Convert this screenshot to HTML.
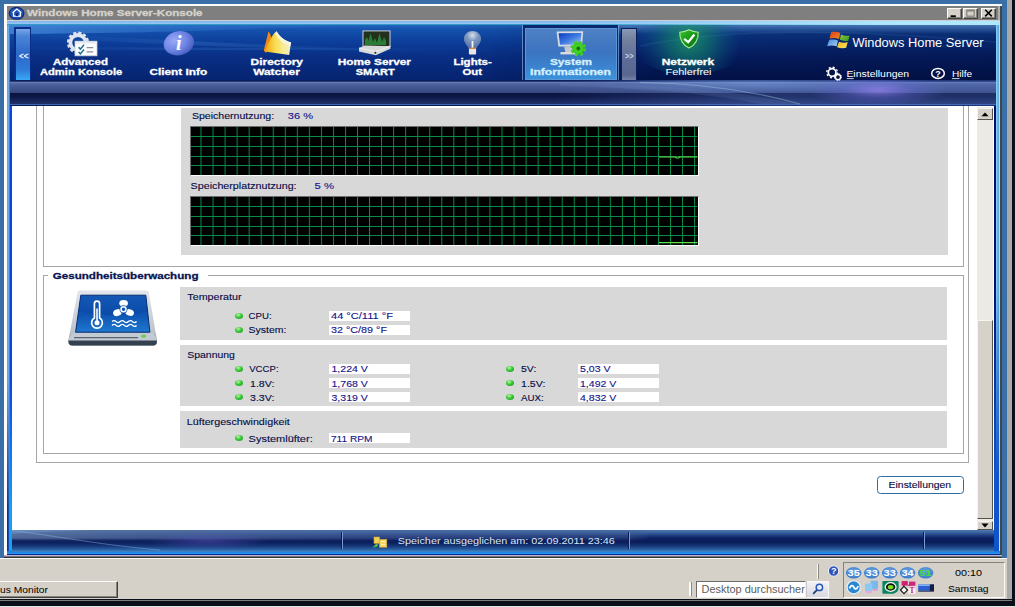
<!DOCTYPE html>
<html>
<head>
<meta charset="utf-8">
<title>Windows Home Server-Konsole</title>
<style>
html,body{margin:0;padding:0;}
body{width:1015px;height:607px;overflow:hidden;position:relative;background:#3a6ea6;font-family:"Liberation Sans",sans-serif;font-size:10px;}
.a{position:absolute;}
#frameR1{left:1007px;top:0;width:5px;height:599.6px;background:#a9a9a9;}
#frameR2{left:1012px;top:0;width:3px;height:605.6px;background:#0b0e16;}
#frameB1{left:0;top:599.4px;width:1015px;height:6.2px;background:linear-gradient(to bottom,#0b0e16 0,#0b0e16 1px,#7e7e80 1.2px,#7e7e80 1.9px,#0b0e16 2.1px,#0b0e16 6.2px);}
#frameB2{left:0;top:605.6px;width:1015px;height:1.4px;background:#e2e6ec;}
/* window */
#win{left:4px;top:4px;width:998.2px;height:553px;background:#fbfbfb;}
#winR{left:1000px;top:6px;width:2.2px;height:551px;background:#3e494f;}
#winB{left:4px;top:555px;width:998px;height:2.5px;background:linear-gradient(to bottom,#bab4cc 0,#bab4cc 1.4px,#343438 1.6px,#343438 2.5px);}
#title{left:7px;top:6px;width:993px;height:14px;background:linear-gradient(to right,#7f7f7f 0,#7f7f7f 991.4px,#b0b0b0 991.4px);}
#titleLine{left:7px;top:19.6px;width:993px;height:1.4px;background:#cdd0d6;}
.tbtn{top:7.8px;width:15px;height:10.8px;box-sizing:border-box;background:#d5d1c9;border:1px solid;border-color:#fbfaf6 #45433f #45433f #fbfaf6;box-shadow:inset -1px -1px 0 #85827c;}
/* app frame */
#app{left:7px;top:21px;width:993px;height:534px;background:linear-gradient(to right,#6a9ad4 0,#72b2f2 2.4px,#0a46d8 2.6px,#0a46d8 5px,#0a46d8 986px,#001070 987px,#001070 989px,#88d2fc 989px,#7cc4f2 990px,#64acdc 990.8px,#64acdc 991.8px,#b4dcf4 992.4px,#b4dcf4 993px);}
#appTop{left:7px;top:21px;width:993px;height:3.6px;z-index:3;background:linear-gradient(to right,rgba(176,232,252,0) 0,rgba(176,232,252,0) 55%,rgba(176,232,252,.95) 88%,rgba(176,232,252,1) 100%),linear-gradient(to bottom,#7eb2ea 0,#94c4f2 2.5px,#2e9cc6 2.7px,#2e9cc6 3.6px);}
#appBot{left:7px;top:550.5px;width:993px;height:4.5px;background:linear-gradient(to bottom,#1a74e0 0,#2492f0 2.6px,#0a2a90 3.1px,#0a2a90 4.5px);}
/* header */
#hdr{left:10px;top:24px;width:986px;height:56px;overflow:hidden;background:linear-gradient(to bottom,#2868be 0,#1452ae 10%,#0c3e9a 32%,#092e84 60%,#062470 100%);}
#hdrDark{left:0;top:0;width:986px;height:56px;background:linear-gradient(to right,rgba(0,4,40,0) 0,rgba(0,4,40,0) 45%,rgba(0,4,40,.3) 66%,rgba(0,4,40,.38) 100%);}
#hdrDark2{left:480px;top:0;width:506px;height:56px;background:linear-gradient(to bottom,rgba(0,4,40,0) 0,rgba(0,4,40,.1) 40%,rgba(0,4,40,.38) 100%);-webkit-mask-image:linear-gradient(to right,transparent 0,#000 35%);mask-image:linear-gradient(to right,transparent 0,#000 35%);}
#sub{left:10px;top:80px;width:986px;height:26px;overflow:hidden;background:linear-gradient(to bottom,#0a1e5c 0,#0a1e5c 1.3px,#6e82b8 2px,#4e629e 4px,#37477f 12.5px,#0a1440 13.5px,#0c1848 17px,#202f68 23.5px,#4270b8 24.4px,#0a1a5a 25.2px);}
#subGlow{left:0;top:0;width:986px;height:26px;background:radial-gradient(ellipse 70px 16px at 868px 10px,rgba(150,130,240,.75) 0,rgba(110,110,220,.35) 50%,rgba(90,100,200,0) 100%),radial-gradient(ellipse 160px 10px at 740px 4px,rgba(130,170,230,.4) 0,rgba(120,160,220,0) 100%),linear-gradient(to right,rgba(80,110,190,0) 0,rgba(80,110,190,0) 55%,rgba(90,120,200,.3) 75%,rgba(90,120,200,.25) 100%);}
/* content */
#content{left:12px;top:106px;width:982px;height:424px;background:#fff;overflow:hidden;}
.gb{border:1px solid #a6a6a6;box-sizing:border-box;}
.pan{background:#d8d8d8;}
.graph{background:#000;border:1px solid;border-color:#6e6e6e #fff #fff #6e6e6e;box-sizing:border-box;overflow:hidden;}
.val{background:#fff;height:10px;width:81px;}
.led{width:8px;height:6px;border-radius:50%;background:radial-gradient(ellipse at 40% 30%,#b8f8a0 0,#38c838 45%,#168c1c 100%);}
.sbb{width:15.4px;box-sizing:border-box;background:#d6d2ca;border:1px solid;border-color:#f6f4ee #55524c #55524c #f6f4ee;}
/* status */
#status{left:12px;top:530px;width:982px;height:21.5px;overflow:hidden;background:linear-gradient(to bottom,#4c78b0 0,#3a629e 2.5px,#1e3c7e 5.500px,#0c2060 8.500px,#0a1c5a 12px,#163676 16px,#2c60a4 19.500px,#3e80be 21.500px);}
#stL{left:0;top:0;width:982px;height:21.5px;background:linear-gradient(to right,rgba(96,120,162,.8) 0,rgba(84,108,156,.7) 120px,rgba(76,100,156,.5) 330px,rgba(70,96,150,.35) 620px,rgba(70,96,150,0) 640px);-webkit-mask-image:linear-gradient(to bottom,#000 0,#000 8px,rgba(0,0,0,.15) 10.5px,rgba(0,0,0,0) 13px);mask-image:linear-gradient(to bottom,#000 0,#000 8px,rgba(0,0,0,.15) 10.5px,rgba(0,0,0,0) 13px);}
#stG{left:0;top:0;width:982px;height:21.5px;background:radial-gradient(ellipse 60px 9px at 196px 11px,rgba(100,90,200,.42) 0,rgba(90,90,200,0) 100%);}
.sep{width:2px;height:17px;top:2px;background:linear-gradient(to right,#0a1a50 0,#0a1a50 50%,#7a9ad0 50%,#7a9ad0 100%);}
/* taskbar */
.grip{width:2.6px;background:linear-gradient(to right,#fdfdfb 0,#fdfdfb 50%,#8a8780 50%,#8a8780 100%);}
#task{left:0;top:557.5px;width:1007px;height:41.9px;background:#d5d1c9;border-top:1.5px solid #fdfdfb;box-sizing:border-box;}
</style>
</head>
<body>
<div class="a" id="frameR1"></div>
<div class="a" id="frameB1"></div>
<div class="a" id="frameB2"></div>
<div class="a" id="frameR2"></div>

<div class="a" id="win"></div>
<div class="a" id="winR"></div>
<div class="a" id="winB"></div>
<div class="a" id="title"></div>
<div class="a" id="titleLine"></div>
<div class="a tbtn" style="left:947px;"></div><div class="a tbtn" style="left:963px;"></div><div class="a tbtn" style="left:981px;"></div>
<div class="a" id="app"></div>
<div class="a" id="frL" style="left:7px;top:380px;width:5.500px;height:175px;background:linear-gradient(to right,#1c2c8a 0,#1c2c8a 1.400px,#14a0f8 1.800px,#14a0f8 4.800px,#4890c8 5.200px);-webkit-mask-image:linear-gradient(to bottom,transparent 0,#000 130px);mask-image:linear-gradient(to bottom,transparent 0,#000 130px);"></div>
<div class="a" id="frR" style="left:994px;top:106px;width:4.800px;height:449px;background:linear-gradient(to bottom,rgba(16,84,200,0) 0,rgba(16,84,200,0) 180px,rgba(16,84,200,.55) 280px,rgba(16,84,204,1) 370px,rgba(16,84,204,1) 449px);"></div>
<div class="a" id="appTop"></div>
<div class="a" id="appBot"></div>

<div class="a" id="hdr"><div class="a" id="hdrDark"></div><div class="a" id="hdrDark2"></div>
<svg class="a" style="left:0;top:0" width="986" height="56" viewBox="10 24 986 56">
<defs>
<radialGradient id="gGlow" cx="689" cy="40" r="52" gradientUnits="userSpaceOnUse"><stop offset="0" stop-color="#1c9a60" stop-opacity=".85"/><stop offset=".45" stop-color="#128070" stop-opacity=".55"/><stop offset="1" stop-color="#0a5a90" stop-opacity="0"/></radialGradient>
<linearGradient id="gSw1" x1="0" y1="0" x2="1" y2="0"><stop offset="0" stop-color="#5aa0ec" stop-opacity=".55"/><stop offset=".6" stop-color="#3a80d8" stop-opacity=".25"/><stop offset="1" stop-color="#3a80d8" stop-opacity="0"/></linearGradient>
<linearGradient id="gSw2" x1="0" y1="0" x2="1" y2="0"><stop offset="0" stop-color="#4a90e0" stop-opacity="0"/><stop offset=".4" stop-color="#5aa0e8" stop-opacity=".35"/><stop offset="1" stop-color="#3a80d8" stop-opacity="0"/></linearGradient>
<linearGradient id="gTopR" x1="0" y1="0" x2="0" y2="1"><stop offset="0" stop-color="#6a9ad8" stop-opacity=".6"/><stop offset="1" stop-color="#6a9ad8" stop-opacity="0"/></linearGradient>
</defs>
<path d="M10 24H400C300 27 180 33 10 34Z" fill="url(#gSw1)"/>
<path d="M30 34C150 38 260 46 460 52C300 50.500 150 44 30 37Z" fill="url(#gSw2)" opacity=".55"/>
<path d="M10 47C160 47 300 49 520 48C300 51 160 50 10 49.500Z" fill="url(#gSw2)" opacity=".5"/>
<rect x="600" y="24" width="396" height="10" fill="url(#gTopR)"/>
<ellipse cx="689" cy="40" rx="62" ry="34" fill="url(#gGlow)"/>
<path d="M640 46C720 30 820 27 996 42" stroke="#7ab0e8" stroke-opacity=".1" stroke-width="1.6" fill="none"/>
</svg></div>
<div class="a" id="navL" style="left:14.400px;top:27px;width:17px;height:53px;box-sizing:border-box;border:2.200px solid #0a2e86;border-left-width:2.800px;border-right-width:1.800px;border-bottom:0;background:linear-gradient(to bottom,#7aa6e6 0,#4a84d8 14%,#2e68c8 50%,#2e7cd8 80%,#3aa8f4 100%);"></div>
<div class="a" id="tabO" style="left:522.4px;top:20.5px;width:97px;height:60.5px;box-sizing:border-box;border:1px solid rgba(150,190,235,.6);border-bottom-color:rgba(150,190,235,.35);"></div>
<div class="a" id="tabD" style="left:523.4px;top:25px;width:95px;height:55.5px;background:#0a2870;"></div>
<div class="a" id="tabI" style="left:524.9px;top:27.8px;width:92.4px;height:51.8px;box-sizing:border-box;border:1px solid #5c94d4;background:linear-gradient(to bottom,#4e80c4 0,#3c74c0 45%,#3a80cc 70%,#3a92dc 100%);"></div>
<div class="a" id="navR" style="left:621.2px;top:28px;width:15.4px;height:52px;box-sizing:border-box;border:1.2px solid #0a1e5c;border-bottom:0;background:linear-gradient(to bottom,#8a98b8 0,#74829e 20%,#5c6c98 60%,#5a6890 90%,#7482a8 100%);"></div>
<div class="a" id="sub"><div class="a" id="subGlow"></div><svg class="a" style="left:0;top:0" width="986" height="26" viewBox="10 80 986 26"><path d="M640 82.500C700 83 750 90 800 104" stroke="#a4d4ec" stroke-opacity=".4" stroke-width="1.100" fill="none"/><path d="M560 83C640 84 720 88 800 104L760 104C700 92 640 88 560 86Z" fill="#88b0e0" fill-opacity=".12"/></svg></div>
<div class="a" id="content"><div class="a" style="left:-12px;top:-106px;width:1015px;height:607px;">
 <div class="a gb" style="left:36px;top:90px;width:933px;height:373px;"></div>
 <div class="a gb" style="left:43px;top:90px;width:921px;height:177px;"></div>
 <div class="a pan" style="left:180.5px;top:107.5px;width:767.5px;height:147.5px;"></div>
 <div class="a graph" style="left:190px;top:126px;width:508.5px;height:50px;"></div>
 <div class="a graph" style="left:190px;top:196px;width:508.5px;height:50px;"></div>
 <div class="a gb" style="left:43px;top:275px;width:921px;height:179px;"></div>
 <div class="a" style="left:48px;top:270px;width:160px;height:12px;background:#fff;"></div>
 <div class="a pan" style="left:180px;top:286.5px;width:767px;height:53px;"></div>
 <div class="a pan" style="left:180px;top:345px;width:767px;height:60.5px;"></div>
 <div class="a pan" style="left:180px;top:411px;width:767px;height:36.5px;"></div>
 <div class="a val" style="left:329px;top:310.6px;"></div>
 <div class="a val" style="left:329px;top:324.6px;"></div>
 <div class="a val" style="left:329px;top:363.8px;"></div>
 <div class="a val" style="left:329px;top:377.9px;"></div>
 <div class="a val" style="left:329px;top:391.9px;"></div>
 <div class="a val" style="left:329px;top:433px;"></div>
 <div class="a val" style="left:577.5px;top:363.8px;"></div>
 <div class="a val" style="left:577.5px;top:377.9px;"></div>
 <div class="a val" style="left:577.5px;top:391.9px;"></div>
 <div class="a led" style="left:235.4px;top:312.8px;"></div>
 <div class="a led" style="left:235.4px;top:326.8px;"></div>
 <div class="a led" style="left:235.4px;top:366px;"></div>
 <div class="a led" style="left:235.4px;top:380.2px;"></div>
 <div class="a led" style="left:235.4px;top:394.2px;"></div>
 <div class="a led" style="left:235.4px;top:435.2px;"></div>
 <div class="a led" style="left:506.3px;top:366px;"></div>
 <div class="a led" style="left:506.3px;top:380.2px;"></div>
 <div class="a led" style="left:506.3px;top:394.2px;"></div>
 <div class="a" id="btn" style="left:877px;top:476px;width:87px;height:17.5px;box-sizing:border-box;border:1px solid #2e6ca4;border-radius:3.5px;background:#fff;"></div>
 <div class="a" id="sbTrack" style="left:977px;top:107px;width:16px;height:423px;background:#eceae4;"></div>
 <div class="a sbb" style="left:977.3px;top:108px;height:12px;"></div>
 <div class="a sbb" style="left:977.3px;top:320px;height:199px;"></div>
 <div class="a sbb" style="left:977.3px;top:520.5px;height:9.5px;"></div>
</div></div>
<div class="a" id="status"><div class="a" id="stL"></div><div class="a" id="stG"></div>
<svg class="a" style="left:0;top:0" width="982" height="22" viewBox="12 530 982 22"><path d="M12 530.500C50 535 100 545 160 550" stroke="#9ac4f0" stroke-opacity=".4" stroke-width="1" fill="none"/><path d="M12 530H90C60 532 40 531 12 534Z" fill="#7aa4dc" fill-opacity=".35"/></svg>
<div class="a sep" style="left:328.5px;"></div><div class="a sep" style="left:615.5px;"></div><div class="a sep" style="left:910.5px;"></div></div>
<div class="a" id="task"></div>
<div class="a" id="tbtn" style="left:-2px;top:581px;width:119.5px;height:17px;box-sizing:border-box;border:1px solid;border-color:#fff #404040 #404040 #fff;background:#d5d1c9;box-shadow:inset -1px -1px 0 #85827c;"></div>
<div class="a grip" style="left:689.2px;top:582.3px;height:14px;"></div>
<div class="a grip" style="left:816.8px;top:564px;height:15px;"></div>
<div class="a" id="srch" style="left:696.4px;top:581.4px;width:109.5px;height:16.6px;box-sizing:border-box;background:#fff;border:1px solid;border-color:#6e6c68 #f4f2ee #f4f2ee #6e6c68;"></div>
<div class="a" id="srchB" style="left:805.6px;top:581.4px;width:23.4px;height:16.6px;background:linear-gradient(to bottom,#f2f2f4,#d8d8de);box-sizing:border-box;border:1px solid #f8f8f8;border-left-color:#c8c8cc;"></div>
<div class="a" id="tray" style="left:843px;top:562px;width:161.5px;height:36px;box-sizing:border-box;border:1px solid;border-color:#85827c #fbfaf6 #fbfaf6 #85827c;"></div>
<svg class="a" id="ov" style="left:0;top:0" width="1015" height="607" viewBox="0 0 1015 607">
<defs>
<pattern id="grid" x="200.5" y="127" width="12.04" height="9.73" patternUnits="userSpaceOnUse"><path d="M0.5 0V9.73" stroke="#0a8c4a" stroke-width="1" fill="none"/></pattern>
<pattern id="grid2" x="200.5" y="196.8" width="12.04" height="9.85" patternUnits="userSpaceOnUse"><path d="M0.5 0V9.85" stroke="#0a8c4a" stroke-width="1" fill="none"/></pattern>
</defs>
<g id="icons">
<defs>
<radialGradient id="gInfo" cx=".38" cy=".35" r=".75"><stop offset="0" stop-color="#9aaaf8"/><stop offset=".55" stop-color="#6e84e4"/><stop offset="1" stop-color="#3e54b8"/></radialGradient>
<linearGradient id="gFold" x1="0" y1="0" x2="1" y2="0"><stop offset="0" stop-color="#f49c18"/><stop offset=".18" stop-color="#f8bc28"/><stop offset=".4" stop-color="#f8dc54"/><stop offset=".7" stop-color="#f8ec90"/><stop offset="1" stop-color="#f2eecc"/></linearGradient>
<radialGradient id="gBulb" cx=".5" cy=".25" r=".8"><stop offset="0" stop-color="#d4e0ee"/><stop offset=".4" stop-color="#8098c0"/><stop offset="1" stop-color="#4c6ca4"/></radialGradient>
<linearGradient id="gScr" x1="0" y1="0" x2="1" y2="1"><stop offset="0" stop-color="#0c38c0"/><stop offset=".5" stop-color="#3c78e0"/><stop offset="1" stop-color="#a0c4f4"/></linearGradient>
<linearGradient id="gShield" x1="0" y1="0" x2="1" y2="1"><stop offset="0" stop-color="#38c030"/><stop offset=".5" stop-color="#189818"/><stop offset="1" stop-color="#0a6410"/></linearGradient>
<linearGradient id="gRed" x1="0" y1="0" x2="1" y2="1"><stop offset="0" stop-color="#e03c18"/><stop offset="1" stop-color="#f48a20"/></linearGradient>
<linearGradient id="gGrn" x1="0" y1="0" x2="1" y2="1"><stop offset="0" stop-color="#88c83c"/><stop offset="1" stop-color="#3c981c"/></linearGradient>
<linearGradient id="gBlu" x1="0" y1="0" x2="1" y2="1"><stop offset="0" stop-color="#4088dc"/><stop offset="1" stop-color="#a8d0f4"/></linearGradient>
<linearGradient id="gYel" x1="0" y1="0" x2="1" y2="1"><stop offset="0" stop-color="#f8b418"/><stop offset="1" stop-color="#f8e468"/></linearGradient>
</defs>
<g id="i-title"><ellipse cx="16.600" cy="13.300" rx="7.300" ry="5.900" fill="#1e54b8" stroke="#0c2a7c" stroke-width="1.200"/><path d="M12.500 12.700L16.900 9.100L21.300 12.700M13.500 12.400V16.100H20.300V12.400" fill="none" stroke="#fff" stroke-width="1.300"/><rect x="15.700" y="13.300" width="2.400" height="2.800" fill="#0c2a7c"/></g>
<g id="i-admin"><circle cx="78" cy="42.600" r="7.600" fill="none" stroke="#dfe4ee" stroke-width="3.800"/><circle cx="78" cy="42.600" r="10" fill="none" stroke="#dfe4ee" stroke-width="2.200" stroke-dasharray="3.100 2.136"/><rect x="75" y="41.2" width="22" height="14.6" fill="#fdfdfd" stroke="#c4ccdc" stroke-width=".8"/><rect x="75.4" y="41.5" width="21.2" height="2" fill="#e4e8f0"/><path d="M78.6 47.2l1.8 1.9l3.6-4.4M78.6 52l1.8 1.9l3.6-4.4" fill="none" stroke="#1a6e90" stroke-width="1.5"/><path d="M86.6 47.6h6.6M86.6 51.8h6.6" stroke="#8c8c9c" stroke-width="1.2"/></g>
<g id="i-info"><ellipse cx="178.9" cy="43.3" rx="15.3" ry="12" fill="url(#gInfo)" transform="rotate(-12 178.9 43.3)"/><text x="176" y="50.400" font-family="Liberation Serif" font-style="italic" font-weight="bold" font-size="20" fill="#fff">i</text></g>
<g id="i-dir"><path d="M268.400 31.600C267 38 265 45 263.800 50.600L266 53L272 40C271 36 270 33 268.400 31.600Z" fill="#ee8a14"/><path d="M276.500 31.300C274.500 33 272.500 35 271.500 37.500C269 42 266.500 47 264.800 51.400L289.200 55L291 42.300C285 41 280 37 276.500 31.300Z" fill="url(#gFold)"/><path d="M276.500 31.300C280 37 285 41 291 42.300L290.500 46C284 44 278.500 40 275 33.500Z" fill="#f6f6ec" opacity=".85"/></g>
<g id="i-smart"><rect x="363" y="30.9" width="27" height="15.6" fill="#24301f" stroke="#bcc4cc" stroke-width="1.1"/><path d="M365 45V40l2-3 1.5 4 2-8 2.5 9 2-4 2 5 2.5-10 2.5 9 2-5 2 4V45Z" fill="#2a8c3a" opacity=".85"/><path d="M364.9 45.4L390.4 46.2V48.8L375.8 55.2L359 51.6V48Z" fill="#d6dad8"/><path d="M359 48L375.8 51.6L390.4 46.2" fill="none" stroke="#f4f4f4" stroke-width=".8"/><circle cx="375.4" cy="52.8" r="1" fill="#202820"/></g>
<g id="i-bulb"><path d="M472.500 31c4.900 0 8.600 3.500 8.600 7.900c0 3.800-3.400 6.100-4.600 9.300h-8c-1.200-3.200-4.600-5.500-4.600-9.300c0-4.400 3.700-7.900 8.600-7.900z" fill="url(#gBulb)"/><path d="M472.5 41v7" stroke="#f4f4f4" stroke-width="1.8"/><rect x="468.9" y="48" width="7.2" height="6.4" rx="1" fill="#e6e6e6"/><rect x="468.9" y="47.6" width="7.2" height="1.3" fill="#cc7c3c"/></g>
<g id="i-sys"><path d="M556.6 31.6L583.2 31.2L582 46.4L558.4 46.6Z" fill="#d8dce4"/><path d="M558.6 33.2L581.4 32.9L580.4 44.6L560 44.8Z" fill="url(#gScr)"/><path d="M564 46.6h10l1.5 6h-10z" fill="#c4c8d0"/><path d="M560.5 52h16v2.4h-16z" fill="#dcdcdc"/><circle cx="578.3" cy="48.500" r="5.700" fill="#40d024" stroke="#229c18" stroke-width=".6"/><circle cx="578.3" cy="48.500" r="6.500" fill="none" stroke="#40d024" stroke-width="2.600" stroke-dasharray="2.900 2.205"/><circle cx="578.3" cy="48.500" r="1.900" fill="#1c6c14"/></g>
<g id="i-shield"><path d="M689 29.8c3 1.6 6 2.2 9.2 2.4c.3 7.2-2.6 12.4-9.2 15.8c-6.600-3.400-9.500-8.600-9.200-15.800c3.200-.2 6.200-.8 9.200-2.400z" fill="url(#gShield)" stroke="#a4e894" stroke-width="1.1"/><path d="M684.200 38.900l4 3.200l6.200-7.600" fill="none" stroke="#fff" stroke-width="2.2"/></g>
<g id="i-flag"><path d="M831.1 32.2C834.500 31.200 837.500 31.800 840.300 32.900L839 39.100C836 38 833 37.600 829.600 38.600Z" fill="url(#gRed)"/><path d="M841 34.600C844 35.800 847 36.200 849.600 35.400L848.200 40.800C845.500 41.500 842.500 41 839.800 39.600Z" fill="url(#gGrn)"/><path d="M829.100 40.100C832.500 39.200 835.500 39.600 838 40.600L836.600 46.300C834 45.300 831 45 827.200 46Z" fill="url(#gBlu)"/><path d="M839 41.800C842 43 845 43.300 847.700 42.100L846.200 47.700C843.500 48.500 840 48.300 837 47.200Z" fill="url(#gYel)"/></g>
<g id="i-gears" fill="none" stroke="#fff"><circle cx="832.1" cy="72.500" r="3.800" stroke-width="1.700"/><circle cx="832.1" cy="72.500" r="5.300" stroke-width="1.400" stroke-dasharray="2 2.160"/><circle cx="838" cy="77.100" r="2.600" stroke-width="1.400"/><circle cx="838" cy="77.100" r="3.500" stroke-width=".9" stroke-dasharray="1.300 1.450"/></g>
<g id="i-help"><ellipse cx="938" cy="73.400" rx="6.300" ry="5" fill="none" stroke="#fff" stroke-width="1.500"/><text x="935.3" y="76.800" font-weight="bold" font-size="8.500" fill="#fff" textLength="5.400" lengthAdjust="spacingAndGlyphs">?</text></g>
<path d="M846.900 78.600h6.800M951.900 78.600h7.600" stroke="#e8e8f0" stroke-width=".9"/>
<g id="i-chev" font-weight="bold" font-size="9" fill="#fff"><text x="19" y="59" textLength="9.500" lengthAdjust="spacingAndGlyphs">&lt;&lt;</text><text x="625" y="59" fill="#c8d0e4" textLength="8.500" lengthAdjust="spacingAndGlyphs">&gt;&gt;</text></g>
</g>
<g id="icons2">
<defs>
<linearGradient id="gMon" x1="0" y1="0" x2="0" y2="1"><stop offset="0" stop-color="#1a66c4"/><stop offset=".5" stop-color="#0e52b0"/><stop offset="1" stop-color="#1e78d0"/></linearGradient>
<linearGradient id="gFrm" x1="0" y1="0" x2="0" y2="1"><stop offset="0" stop-color="#e2e6ec"/><stop offset=".75" stop-color="#bcc4ce"/><stop offset="1" stop-color="#5c6874"/></linearGradient>
<radialGradient id="gNum" cx=".5" cy=".35" r=".7"><stop offset="0" stop-color="#64a0e0"/><stop offset="1" stop-color="#3a78c8"/></radialGradient>
</defs>
<g id="i-tb" stroke="#000" fill="none"><path d="M950.600 16.200h5.200" stroke-width="1.800"/><rect x="966.800" y="10.200" width="7.400" height="6" stroke="#85827c" stroke-width="1.200"/><path d="M966.800 10.600h7.400" stroke="#85827c" stroke-width="1.800"/><path d="M985.200 9.800l6.600 6.600M991.800 9.800l-6.600 6.600" stroke-width="1.600"/></g>
<g id="i-health">
<path d="M77.600 292.200Q78 290.600 79.600 290.600H146.800Q148.400 290.600 148.800 292.200L157 340.500Q157.300 345.600 153 345.600H72.400Q68.100 345.600 68.400 340.500Z" fill="url(#gFrm)"/>
<path d="M68.700 338.500L72 333H153.400L156.700 338.500V341.600Q156.700 345.600 153 345.600H72.400Q68.700 345.600 68.700 341.600Z" fill="#c2cad4"/>
<path d="M68.500 340.600H156.900Q157.200 345.600 153 345.600H72.400Q68.200 345.600 68.500 340.600Z" fill="#34424f"/>
<path d="M80.800 295.200H145.800L149.900 332.200H75.600Z" fill="url(#gMon)" stroke="#0a2a6a" stroke-width="1"/>
<path d="M74 337.600H138" stroke="#5a6470" stroke-width="1.400"/>
<ellipse cx="143.600" cy="336.200" rx="2.600" ry="1.600" fill="#6ad04a"/>
<path d="M80.800 295.200H145.800L147.600 311C130 316 100 317 78.600 311Z" fill="#0a3e9c" opacity=".35"/>
<g fill="none" stroke="#fff" stroke-width="1.700"><path d="M94.400 318V303.700a2.600 2.600 0 0 1 5.200 0V318a5.400 5.400 0 1 1-5.200 0z"/><path d="M112 321.600q2.200-2 4.100 0t4.100 0t4.100 0t4.100 0t4.100 0t4.100 0" stroke-width="1.300"/><path d="M112 325.400q2.200-2 4.100 0t4.100 0t4.100 0t4.100 0t4.100 0t4.100 0" stroke-width="1.300"/></g>
<circle cx="97" cy="322.800" r="2.500" fill="#fff"/><path d="M97 322V308.600" stroke="#fff" stroke-width="1.600"/>
<g fill="#fff"><ellipse cx="123.600" cy="303.200" rx="4.300" ry="3.300"/><ellipse cx="117.400" cy="312.700" rx="4.400" ry="3.300" transform="rotate(-20 117.400 312.700)"/><ellipse cx="129.700" cy="312.500" rx="4.400" ry="3.300" transform="rotate(20 129.700 312.500)"/></g>
<circle cx="123.500" cy="309.200" r="3.900" fill="#1054b0"/><circle cx="123.500" cy="309.200" r="2.500" fill="none" stroke="#fff" stroke-width="1.500"/>
</g>
<g id="i-stat"><rect x="374" y="537" width="5.600" height="6.400" fill="#f0d050" stroke="#c8a030" stroke-width=".6"/><rect x="379.500" y="539.400" width="7.300" height="7.800" fill="#f4d868" stroke="#d0a838" stroke-width=".6"/><path d="M381 541.500h4.400M381 544.500h4.400" stroke="#fff0b0" stroke-width="1"/><path d="M372.400 547.200l3.200-2.800h3.400l-2.800 2.800z" fill="#38b838"/><path d="M375.500 545l2 0" stroke="#d8f8d0" stroke-width=".7"/></g>
<g id="i-mag"><circle cx="819.400" cy="587.400" r="3.200" fill="#e8f0fc" stroke="#2a58b4" stroke-width="1.500"/><path d="M816.800 590.200l-3.600 3.600" stroke="#203c78" stroke-width="1.800"/></g>
<g id="i-q"><circle cx="833.600" cy="571" r="5.200" fill="#2a54b8" stroke="#f4f4f8" stroke-width="1"/><text x="830.900" y="574.400" font-weight="bold" font-size="9" fill="#fff">?</text></g>
<g id="i-nums"><ellipse cx="853.700" cy="572.800" rx="7.800" ry="5.800" fill="url(#gNum)"/><ellipse cx="871.700" cy="572.800" rx="7.800" ry="5.800" fill="url(#gNum)"/><ellipse cx="889.700" cy="572.800" rx="7.800" ry="5.800" fill="url(#gNum)"/><ellipse cx="907.600" cy="572.800" rx="7.800" ry="5.800" fill="url(#gNum)"/><ellipse cx="925.600" cy="572.800" rx="7.800" ry="5.800" fill="url(#gNum)"/>
<g font-weight="bold" font-size="9.400" fill="#fff"><text x="847.600" y="576.200" textLength="12.200" lengthAdjust="spacingAndGlyphs">35</text><text x="865.600" y="576.200" textLength="12.200" lengthAdjust="spacingAndGlyphs">33</text><text x="883.600" y="576.200" textLength="12.200" lengthAdjust="spacingAndGlyphs">33</text><text x="901.500" y="576.200" textLength="12.200" lengthAdjust="spacingAndGlyphs">34</text><text x="919.600" y="576.200" textLength="12" lengthAdjust="spacingAndGlyphs" fill="#44dc44">51</text></g></g>
<g id="i-tray2">
<circle cx="853.700" cy="587.300" r="6.600" fill="#2a86d0" stroke="#e8f4fc" stroke-width="1.100"/><path d="M849.400 588.400c1.400-3.600 3.400-3.600 4.400-1.200s3 2.400 4.400-1.200" fill="none" stroke="#fff" stroke-width="1.700"/>
<rect x="870.600" y="580.800" width="7.400" height="8.200" rx="1" fill="#78b8ec"/><rect x="865" y="583.400" width="7.400" height="8" rx="1" fill="#8cc8f4"/><rect x="866" y="591" width="5.600" height="2.200" fill="#e8a8d8"/><rect x="872.600" y="588.800" width="4.800" height="2" fill="#d8a0d0"/>
<path d="M883 581h14.400c.8 0 1.200.5 1.200 1.200v5.600c0 3.400-3.200 6-6.600 6H883.400c-.6 0-1-.4-1-1V582c0-.6.200-1 .6-1z" fill="#0a8464"/><ellipse cx="890.600" cy="587" rx="5.400" ry="4.400" fill="#101810" stroke="#f0f8f0" stroke-width="1.300"/><ellipse cx="890.600" cy="587.200" rx="2.800" ry="2.100" fill="#7cdc20"/>
<rect x="901.600" y="581" width="6.200" height="4.600" fill="#d42478"/><rect x="909" y="581.600" width="6.400" height="4.200" fill="#d42478"/><path d="M903 586l4-3.500M910 586l-2-1" stroke="#b01860" stroke-width="1"/><rect x="908.400" y="586.600" width="7" height="7" fill="#fdf4f8"/><text x="909.600" y="593" font-family="Liberation Serif" font-weight="bold" font-size="7.500" fill="#c81868">T</text><path d="M904 586.400l3.600 3.600l-3.600 3.600l-3.600-3.600z" fill="#f4f4f4" stroke="#181818" stroke-width="1.100"/>
<rect x="918.200" y="584.400" width="15.800" height="6.400" fill="#2c60d0"/><rect x="918.200" y="584.400" width="15.800" height="1.600" fill="#88b0f0"/><rect x="929.800" y="584.400" width="4.200" height="6.400" fill="#141c44"/><path d="M918.200 591.200h15.800" stroke="#10183c" stroke-width=".9"/>
</g>
</g>
<g id="i-sb" fill="#000"><path d="M985 112.400l3.600 3.800h-7.200z"/><path d="M985 527.400l3.600-3.800h-7.200z"/></g>
<g id="graphs">
<rect x="191" y="127" width="506.5" height="48" fill="url(#grid)"/>
<rect x="191" y="197" width="506.5" height="48" fill="url(#grid2)"/>
<path d="M191 136.500H697.500M191 146.500H697.500M191 156.500H697.500M191 165.500H697.500M191 206.500H697.500M191 216.500H697.500M191 226.500H697.500M191 235.500H697.500" stroke="#0a8c4a" stroke-width="1" fill="none"/>
<path d="M659 157H675l1.5 1h2l1-1H697.5" stroke="#5ee04a" stroke-width="1.2" fill="none"/>
<path d="M659 242.6H697.5" stroke="#5ee04a" stroke-width="1.2" fill="none"/>
</g>
<g id="t-title" font-weight="bold" font-size="9.3" fill="#d6d2ca" stroke="#d6d2ca" stroke-width=".3"><text x="27.1" y="16.4" textLength="175.5" lengthAdjust="spacingAndGlyphs">Windows Home Server-Konsole</text></g>
<g id="t-nav" font-weight="bold" font-size="9.6" fill="#fff" stroke="#fff" stroke-width=".3"><text x="52.9" y="65" textLength="55.1" lengthAdjust="spacingAndGlyphs">Advanced</text><text x="39.9" y="75.4" textLength="82.4" lengthAdjust="spacingAndGlyphs">Admin Konsole</text><text x="149.4" y="75.4" textLength="57.8" lengthAdjust="spacingAndGlyphs">Client Info</text><text x="250.6" y="65" textLength="52.4" lengthAdjust="spacingAndGlyphs">Directory</text><text x="253.2" y="75.4" textLength="46.6" lengthAdjust="spacingAndGlyphs">Watcher</text><text x="337.7" y="65" textLength="73.3" lengthAdjust="spacingAndGlyphs">Home Server</text><text x="355.7" y="75.4" textLength="39" lengthAdjust="spacingAndGlyphs">SMART</text><text x="453.4" y="65" textLength="38.4" lengthAdjust="spacingAndGlyphs">Lights-</text><text x="462.5" y="75.4" textLength="19.5" lengthAdjust="spacingAndGlyphs">Out</text><text x="661.7" y="65" textLength="52.4" lengthAdjust="spacingAndGlyphs">Netzwerk</text></g>
<g id="t-navsel" font-weight="bold" font-size="9.6" fill="#d4f0ff" stroke="#d4f0ff" stroke-width=".3"><text x="549.9" y="65" textLength="42.1" lengthAdjust="spacingAndGlyphs">System</text><text x="530" y="75.4" textLength="81" lengthAdjust="spacingAndGlyphs">Informationen</text></g>
<g id="t-hdr" font-size="9.6" fill="#fff"><text x="665.6" y="75.4" textLength="45.9" lengthAdjust="spacingAndGlyphs">Fehlerfrei</text><text x="846.4" y="77.4" textLength="62.8" lengthAdjust="spacingAndGlyphs">Einstellungen</text><text x="952" y="77.4" textLength="20.1" lengthAdjust="spacingAndGlyphs">Hilfe</text></g>
<g id="t-brand" font-size="12" fill="#fff"><text x="852.4" y="46.6" textLength="131.2" lengthAdjust="spacingAndGlyphs">Windows Home Server</text></g>
<g id="t-lab" font-size="9.5" fill="#060c46" stroke="#060c46" stroke-width=".12"><text x="191.9" y="118.9" textLength="82.2" lengthAdjust="spacingAndGlyphs">Speichernutzung:</text><text x="190.6" y="189" textLength="106" lengthAdjust="spacingAndGlyphs">Speicherplatznutzung:</text><text x="187.3" y="300" textLength="54.3" lengthAdjust="spacingAndGlyphs">Temperatur</text><text x="248.6" y="319.2" textLength="23" lengthAdjust="spacingAndGlyphs">CPU:</text><text x="248.6" y="333.2" textLength="37.8" lengthAdjust="spacingAndGlyphs">System:</text><text x="187.3" y="358.4" textLength="47.6" lengthAdjust="spacingAndGlyphs">Spannung</text><text x="249.2" y="372.4" textLength="29.4" lengthAdjust="spacingAndGlyphs">VCCP:</text><text x="250" y="386.5" textLength="24.4" lengthAdjust="spacingAndGlyphs">1.8V:</text><text x="250" y="400.5" textLength="24.4" lengthAdjust="spacingAndGlyphs">3.3V:</text><text x="186.8" y="424.8" textLength="103" lengthAdjust="spacingAndGlyphs">Lüftergeschwindigkeit</text><text x="248.6" y="441.6" textLength="64.1" lengthAdjust="spacingAndGlyphs">Systemlüfter:</text><text x="521" y="372.4" textLength="15.3" lengthAdjust="spacingAndGlyphs">5V:</text><text x="521" y="386.5" textLength="24.4" lengthAdjust="spacingAndGlyphs">1.5V:</text><text x="521" y="400.5" textLength="22.7" lengthAdjust="spacingAndGlyphs">AUX:</text><text x="888.6" y="488.2" textLength="62.5" lengthAdjust="spacingAndGlyphs">Einstellungen</text></g>
<g id="t-val" font-size="9.5" fill="#14148c" stroke="#14148c" stroke-width=".12"><text x="287.8" y="118.9" textLength="25.2" lengthAdjust="spacingAndGlyphs">36 %</text><text x="314.6" y="189" textLength="19.5" lengthAdjust="spacingAndGlyphs">5 %</text><text x="331" y="319.2" textLength="61.9" lengthAdjust="spacingAndGlyphs">44 °C/111 °F</text><text x="331" y="333.2" textLength="56" lengthAdjust="spacingAndGlyphs">32 °C/89 °F</text><text x="331.5" y="372.4" textLength="36.4" lengthAdjust="spacingAndGlyphs">1,224 V</text><text x="331.5" y="386.5" textLength="36.4" lengthAdjust="spacingAndGlyphs">1,768 V</text><text x="331.5" y="400.5" textLength="36.4" lengthAdjust="spacingAndGlyphs">3,319 V</text><text x="331" y="441.6" textLength="41.4" lengthAdjust="spacingAndGlyphs">711 RPM</text><text x="580" y="372.4" textLength="30.6" lengthAdjust="spacingAndGlyphs">5,03 V</text><text x="580" y="386.5" textLength="36.3" lengthAdjust="spacingAndGlyphs">1,492 V</text><text x="580" y="400.5" textLength="36.3" lengthAdjust="spacingAndGlyphs">4,832 V</text></g>
<g id="t-gb" font-weight="bold" font-size="9.5" fill="#0a1450" stroke="#0a1450" stroke-width=".3"><text x="52.7" y="279.1" textLength="145.8" lengthAdjust="spacingAndGlyphs">Gesundheitsüberwachung</text></g>
<g id="t-status" font-size="9.6" fill="#d6e6f6"><text x="397.8" y="544.4" textLength="217" lengthAdjust="spacingAndGlyphs">Speicher ausgeglichen am: 02.09.2011 23:46</text></g>
<g id="t-task" font-size="9.8" fill="#000"><text x="0" y="592.800" textLength="48" lengthAdjust="spacingAndGlyphs">us Monitor</text><text x="955" y="576" textLength="27" lengthAdjust="spacingAndGlyphs">00:10</text><text x="948" y="591.6" textLength="40.6" lengthAdjust="spacingAndGlyphs">Samstag</text></g>
<g id="t-search" font-size="10" fill="#5c5c5c"><text x="701.5" y="592.6" textLength="103.3" lengthAdjust="spacingAndGlyphs">Desktop durchsucher</text></g>
</svg>
</body>
</html>
